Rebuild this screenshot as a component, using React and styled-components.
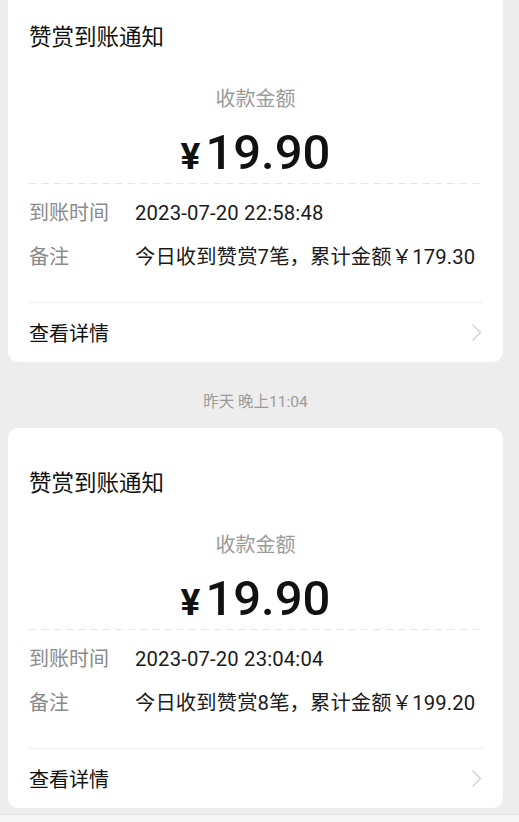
import React from "react";
import styled, { createGlobalStyle } from "styled-components";

const Global = createGlobalStyle`
  html, body { margin: 0; padding: 0; background: #ededed; }
  body { font-family: Roboto, "Noto Sans CJK SC", sans-serif; -webkit-font-smoothing: antialiased; }
`;

const Page = styled.div`
  width: 519px;
  height: 822px;
  overflow: hidden;
  background: #ededed;
  display: flex;
  flex-direction: column;
`;

const Feed = styled.div`
  flex: 1;
  overflow: hidden;
  display: flex;
  flex-direction: column;
  padding: 0 16px 0 8px;
  margin-top: -18px;
`;

const Card = styled.div`
  flex-shrink: 0;
  background: #fff;
  border-radius: 10px;
  padding: 0 21px;
  display: flex;
  flex-direction: column;
`;

const Title = styled.div`
  padding-top: 40px;
  font-size: 22.5px;
  line-height: 30px;
  color: #111;
`;

const AmountLabel = styled.div`
  margin-top: 33px;
  text-align: center;
  font-size: 20px;
  line-height: 28px;
  color: #9a9a9a;
`;

const Amount = styled.div`
  margin-top: 10px;
  height: 60px;
  display: flex;
  align-items: baseline;
  justify-content: center;
  line-height: 60px;
  color: #111;
`;

const Yen = styled.span`
  font-size: 37px;
  font-weight: 700;
  margin-right: 5px;
`;

const Digits = styled.span`
  font-size: 49px;
  font-weight: 500;
`;

const Dashed = styled.div`
  height: 1px;
  background-image: linear-gradient(to right, #e6e6e6 0 8px, transparent 8px 12.3px);
  background-size: 12.3px 1px;
  background-repeat: repeat-x;
`;

const Rows = styled.div`
  display: grid;
  grid-template-columns: 106px 1fr;
  row-gap: 16px;
  padding-top: 15px;
  padding-bottom: 31px;
  border-bottom: 1px solid #eeeeee;
`;

const Label = styled.div`
  font-size: 20px;
  line-height: 28px;
  color: #8a8a8a;
`;

const Value = styled.div`
  font-size: 20.3px;
  line-height: 28px;
  color: #1a1a1a;
  white-space: nowrap;
  letter-spacing: 0.15px;
`;

const Footer = styled.div`
  height: 59px;
  display: flex;
  align-items: center;
  justify-content: space-between;
  font-size: 20px;
  color: #111;
`;

const Stamp = styled.div`
  flex-shrink: 0;
  margin: 28px 0 14px;
  text-align: center;
  font-size: 15.5px;
  line-height: 24px;
  color: #9b9b9b;
`;

const BottomBar = styled.div`
  flex-shrink: 0;
  height: 7px;
  background: #f6f6f6;
  border-top: 1px solid #e2e2e2;
`;

const Chevron = () => (
  <svg width="11" height="19" viewBox="0 0 11 19" fill="none">
    <path d="M1.5 1.5 L9.5 9.5 L1.5 17.5" stroke="#d2d2d2" strokeWidth="1.4" />
  </svg>
);

const Notice = ({ time, count, total }) => (
  <Card>
    <Title>赞赏到账通知</Title>
    <AmountLabel>收款金额</AmountLabel>
    <Amount>
      <Yen>¥</Yen>
      <Digits>19.90</Digits>
    </Amount>
    <Dashed />
    <Rows>
      <Label>到账时间</Label>
      <Value>{time}</Value>
      <Label>备注</Label>
      <Value>{`今日收到赞赏${count}笔，累计金额￥${total}`}</Value>
    </Rows>
    <Footer>
      <span>查看详情</span>
      <Chevron />
    </Footer>
  </Card>
);

export default function App() {
  return (
    <Page>
      <Global />
      <Feed>
        <Notice time="2023-07-20 22:58:48" count={7} total="179.30" />
        <Stamp>昨天 晚上11:04</Stamp>
        <Notice time="2023-07-20 23:04:04" count={8} total="199.20" />
      </Feed>
      <BottomBar />
    </Page>
  );
}
